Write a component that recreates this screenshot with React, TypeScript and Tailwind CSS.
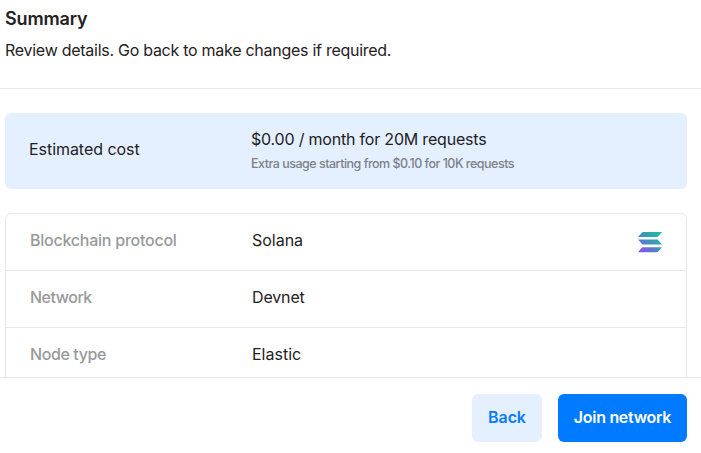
import type { ReactNode } from "react";

function SolanaLogo() {
  return (
    <svg width="24" height="22" viewBox="0 0 24 22" aria-hidden="true">
      <defs>
        <linearGradient id="solana" gradientUnits="userSpaceOnUse" x1="20" y1="1" x2="4" y2="21">
          <stop offset="0" stopColor="#18bf9a" />
          <stop offset="0.5" stopColor="#4390c0" />
          <stop offset="1" stopColor="#8752f3" />
        </linearGradient>
      </defs>
      <g fill="url(#solana)">
        <path d="M4.8 1H23.4Q24 1 23.6 1.5L20 5.6Q19.7 6 19.2 6H.6Q0 6 .4 5.5L4 1.4Q4.3 1 4.8 1Z" />
        <path d="M.6 8.5H19.2Q19.7 8.5 20 8.9L23.6 13Q24 13.5 23.4 13.5H4.8Q4.3 13.5 4 13.1L.4 9Q0 8.5.6 8.5Z" />
        <path d="M4.8 16.2H23.4Q24 16.2 23.6 16.7L20 20.8Q19.7 21.2 19.2 21.2H.6Q0 21.2.4 20.7L4 16.6Q4.3 16.2 4.8 16.2Z" />
      </g>
    </svg>
  );
}

function Row({ label, value, icon }: { label: ReactNode; value: ReactNode; icon?: ReactNode }) {
  return (
    <div className="flex h-[57px] shrink-0 items-center border-b border-[#e6e7e8] px-6 pb-1">
      <div className="w-[222px] font-medium text-[#98999b]">{label}</div>
      <div className="flex-1">{value}</div>
      {icon && <div className="pt-1">{icon}</div>}
    </div>
  );
}

export default function App() {
  return (
    <div className="flex h-[453px] w-[701px] flex-col overflow-hidden bg-white font-['Inter',sans-serif] text-base leading-6 text-[#1f2124]">
      <header className="h-[89px] shrink-0 border-b border-[#e6e7e8] pt-[7px] pl-[5px]">
        <h1 className="text-lg leading-6 font-semibold tracking-[-0.15px]">Summary</h1>
        <p className="mt-[7px] tracking-[-0.27px]">Review details. Go back to make changes if required.</p>
      </header>
      <main className="flex min-h-0 flex-1 flex-col overflow-hidden pt-6 pr-[14px] pl-[5px]">
        <section className="flex h-[76px] shrink-0 rounded-md bg-[#e4f0ff] px-6">
          <div className="w-[222px] pt-6 tracking-[-0.05px]">Estimated cost</div>
          <div className="pt-[14px]">
            <div className="tracking-[-0.2px]">$0.00 / month for 20M requests</div>
            <div className="pt-px text-[12.5px] leading-6 font-medium tracking-[-0.5px] text-[#7d8187]">
              Extra usage starting from $0.10 for 10K requests
            </div>
          </div>
        </section>
        <section className="mt-6 flex shrink-0 flex-col rounded-md border border-[#e6e7e8]">
          <Row
            label={<span className="tracking-[-0.24px]">Blockchain protocol</span>}
            value={<span className="tracking-[-0.02px]">Solana</span>}
            icon={<SolanaLogo />}
          />
          <Row
            label={<span className="tracking-[-0.5px]">Network</span>}
            value={<span className="tracking-[-0.15px]">Devnet</span>}
          />
          <Row
            label={<span className="tracking-[-0.4px]">Node type</span>}
            value={<span className="tracking-[0px]">Elastic</span>}
          />
        </section>
      </main>
      <footer className="flex h-[76px] shrink-0 justify-end gap-4 border-t border-[#e6e7e8] pt-4 pr-[14px] font-semibold">
        <button className="h-12 w-[70px] rounded-md bg-[#e4f0ff] pb-0.5 tracking-[-0.1px] text-[#087cff]">Back</button>
        <button className="h-12 w-[129px] rounded-md bg-[#007aff] pb-0.5 tracking-[-0.3px] whitespace-nowrap text-white">
          Join network
        </button>
      </footer>
    </div>
  );
}
